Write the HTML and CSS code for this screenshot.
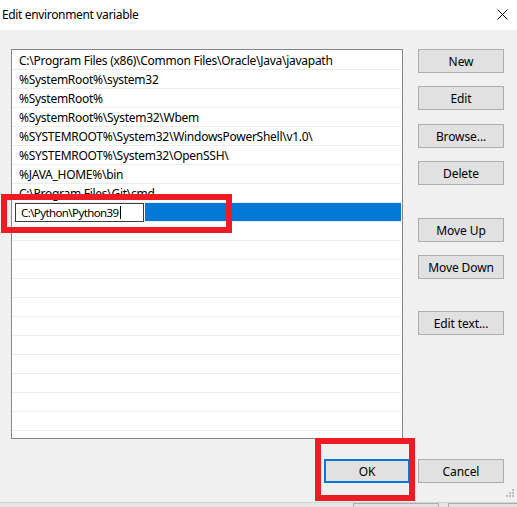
FILE: index.html
```html
<!DOCTYPE html>
<html>
<head>
<meta charset="utf-8">
<title>Edit environment variable</title>
<link rel="stylesheet" href="styles.css">
</head>
<body>
<div class="window">
  <div class="titlebar">
    <span class="title">Edit environment variable</span>
    <svg class="close" width="11" height="11" viewBox="0 0 11 11"><path d="M0.5 0.5 L10.5 10.5 M10.5 0.5 L0.5 10.5" stroke="#000" stroke-width="1" fill="none"/></svg>
  </div>
  <div class="content">
    <div class="main">
      <div class="listbox">
        <div class="row">C:\Program Files (x86)\Common Files\Oracle\Java\javapath</div>
        <div class="row">%SystemRoot%\system32</div>
        <div class="row">%SystemRoot%</div>
        <div class="row">%SystemRoot%\System32\Wbem</div>
        <div class="row">%SYSTEMROOT%\System32\WindowsPowerShell\v1.0\</div>
        <div class="row">%SYSTEMROOT%\System32\OpenSSH\</div>
        <div class="row">%JAVA_HOME%\bin</div>
        <div class="row">C:\Program Files\Git\cmd</div>
        <div class="row selected">
          <div class="editwrap"><div class="editor"><span class="edittext">C:\Python\Python39</span><span class="caret"></span></div></div>
        </div>
        <div class="row"></div>
        <div class="row"></div>
        <div class="row"></div>
        <div class="row"></div>
        <div class="row"></div>
        <div class="row"></div>
        <div class="row"></div>
        <div class="row"></div>
        <div class="row"></div>
        <div class="row"></div>
        <div class="row"></div>
      </div>
      <div class="side">
        <button class="btn">New</button>
        <button class="btn">Edit</button>
        <button class="btn btn-browse">Browse...</button>
        <button class="btn">Delete</button>
        <button class="btn btn-moveup">Move Up</button>
        <button class="btn">Move Down</button>
        <button class="btn btn-edittext">Edit text...</button>
      </div>
    </div>
    <div class="footer">
      <button class="btn btn-default">OK</button>
      <button class="btn">Cancel</button>
    </div>
    <svg class="grip" width="9" height="8" viewBox="0 0 9 8">
      <rect x="6" y="0" width="2" height="2" fill="#bcbcbc"/>
      <rect x="3" y="3" width="2" height="2" fill="#bcbcbc"/>
      <rect x="6" y="3" width="2" height="2" fill="#bcbcbc"/>
      <rect x="0" y="6" width="2" height="2" fill="#bcbcbc"/>
      <rect x="3" y="6" width="2" height="2" fill="#bcbcbc"/>
      <rect x="6" y="6" width="2" height="2" fill="#bcbcbc"/>
    </svg>
  </div>
  <div class="under">
    <div class="under-btn under-btn1"></div>
    <div class="under-btn under-btn2"></div>
  </div>
  <div class="mark mark-edit"></div>
  <div class="mark mark-ok"></div>
</div>
</body>
</html>
```
FILE: styles.css
```css
* { box-sizing: border-box; }
html, body { margin: 0; padding: 0; }
body {
  width: 517px;
  height: 507px;
  overflow: hidden;
  font-family: "Noto Sans", "Open Sans", "Liberation Sans", sans-serif;
  font-size: 12px;
  color: #000;
  background: #f0f0f0;
}
.window {
  position: relative;
  width: 517px;
  height: 507px;
}
.titlebar {
  height: 30px;
  background: #fff;
  display: flex;
  align-items: center;
  justify-content: space-between;
  padding: 0 9px 1px 2px;
}
.title {
  font-size: 12px;
  letter-spacing: -0.35px;
}
.close { display: block; margin-top: -1px; }
.content {
  position: relative;
  height: 472px;
  padding: 19px 13px 0 11px;
  background: #f0f0f0;
}
.main {
  display: flex;
  gap: 15px;
}
.listbox {
  width: 392px;
  height: 390px;
  border: 1px solid #828790;
  background: #fff;
  padding: 1px 1px 0 1px;
  overflow: hidden;
}
.row {
  height: 19px;
  border-bottom: 1px solid #ececec;
  padding: 1px 0 0 6px;
  line-height: 18px;
  white-space: nowrap;
  letter-spacing: -0.27px;
}
.row.selected {
  background: #0078d7;
  padding: 0;
  display: flex;
  align-items: flex-start;
  border-bottom-color: #ececec;
}
.editwrap {
  background: #fff;
  height: 18px;
  padding: 0 1px 0 2px;
}
.editor {
  position: relative;
  width: 129px;
  height: 19px;
  border: 1px solid #3c3c3c;
  background: #fff;
  padding: 0 0 0 5px;
  line-height: 17px;
  white-space: nowrap;
  z-index: 1;
}
.edittext {
  font-size: 11.5px;
  letter-spacing: -0.6px;
  vertical-align: top;
}
.caret {
  display: inline-block;
  vertical-align: top;
  width: 1px;
  height: 13px;
  margin-top: 2px;
  background: #000;
  margin-left: 1px;
}
.side {
  display: flex;
  flex-direction: column;
  gap: 13px;
}
.btn {
  width: 86px;
  height: 24px;
  background: #e1e1e1;
  border: 1px solid #adadad;
  font-family: inherit;
  font-size: 12px;
  letter-spacing: -0.1px;
  color: #000;
  padding: 0;
  margin: 0;
  border-radius: 0;
}
.btn-browse { margin-top: 1px; }
.btn-moveup { margin-top: 20px; }
.btn-edittext { margin-top: 19px; }
.btn-default {
  border: 2px solid #0078d7;
}
.footer {
  display: flex;
  justify-content: flex-end;
  gap: 8px;
  margin-top: 20px;
}
.grip {
  position: absolute;
  right: 2px;
  bottom: 5px;
  display: block;
}
.under {
  position: relative;
  height: 5px;
  background: #e6e6e6;
  border-top: 1px solid #d4d4d4;
}
.under-btn {
  position: absolute;
  top: 0;
  height: 10px;
  background: #e1e1e1;
  border: 1px solid #adadad;
}
.under-btn1 { left: 353px; width: 86px; }
.under-btn2 { left: 448px; width: 80px; }
.mark {
  position: absolute;
  border: 6px solid #ed1c24;
  pointer-events: none;
  z-index: 5;
}
.mark-edit { left: 1px; top: 194px; width: 231px; height: 39px; }
.mark-ok { left: 315px; top: 438px; width: 100px; height: 63px; }
```
